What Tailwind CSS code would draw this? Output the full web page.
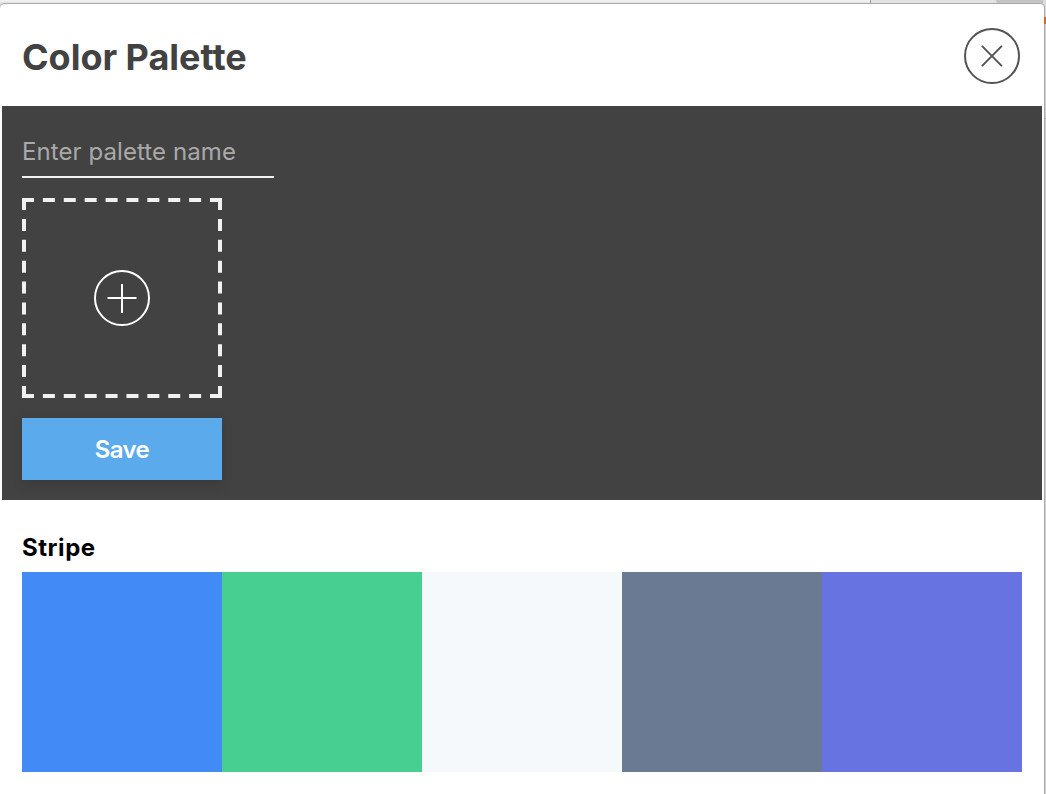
<!DOCTYPE html>
<html lang="en">
<head>
<meta charset="utf-8">
<title>Color Palette</title>
<script src="https://cdn.jsdelivr.net/npm/@tailwindcss/browser@4"></script>
</head>
<body class="relative h-[794px] w-[1046px] overflow-hidden bg-[#cfcfcf] font-['Inter','Liberation_Sans',sans-serif]">
<div class="absolute inset-x-0 top-0 flex h-[4px] bg-linear-to-b from-[#f4f4f4] to-[#dedede]">
  <div class="w-[870px] border-r border-[#999] box-content"></div>
  <div class="w-[125px] bg-[#e2e2e2]"></div>
  <div class="flex-1 rounded-bl bg-[#c4c4c4]"></div>
</div>
<div class="absolute right-0 top-0 h-[17px] w-[3px] bg-[#dcdcdc]"></div>
<main class="relative mt-[3px] h-[800px] w-[1045px] rounded-t-[5px] border-r border-t border-[#aaa] bg-white">
  <header class="flex h-[102px] items-center justify-between pl-[22px] pr-[24px]">
    <h1 class="relative top-[2px] text-[36px] leading-[44px] font-bold tracking-[-0.02px] text-[#424242]">Color Palette</h1>
    <button aria-label="Close" class="mt-[2px]">
      <svg class="block size-[56px]" viewBox="0 0 56 56" fill="none" stroke="#555" stroke-width="2"><circle cx="28" cy="28" r="27"/><path stroke-linecap="round" d="M18.4 18.4 37.4 37.6M37.4 18.4 18.4 37.6"/></svg>
    </button>
  </header>
  <section class="ml-[2px] flex h-[394px] w-[1040px] flex-col items-start bg-[#424242] px-5 pt-5">
    <input aria-label="Palette name" placeholder="Enter palette name" class="h-[52px] w-[252px] border-b-2 border-[#f1f1f1] text-[24px] tracking-[0.08px] text-white outline-none placeholder:text-[#a9a9a9]">
    <button aria-label="Add color" class="mt-5">
      <svg class="block size-[200px]" viewBox="0 0 200 200" fill="none">
        <g stroke="#f1f1f1" stroke-width="4" stroke-dasharray="12 8.889"><path d="M0 2H200"/><path d="M0 198H200"/><path d="M2 0V200"/><path d="M198 0V200"/></g>
        <g stroke="#fff" stroke-width="2"><circle cx="100" cy="100" r="27"/><path d="M85.5 100H114.5M100 86V115"/></g>
      </svg>
    </button>
    <button class="mt-5 h-[62px] w-[200px] bg-[#5aaaec] pt-[2px] text-[24px] font-semibold tracking-[-0.6px] text-white shadow-[0_4px_10px_rgba(0,0,0,0.14)]">Save</button>
  </section>
  <section class="px-[22px] pt-8">
    <h2 class="h-[40px] text-[24px] leading-[32px] font-bold tracking-[0.55px] text-black">Stripe</h2>
    <div class="grid h-[200px] w-[1000px] grid-cols-5">
      <div class="bg-[#428af6]"></div>
      <div class="bg-[#47cf91]"></div>
      <div class="bg-[#f5f9fc]"></div>
      <div class="bg-[#6a7a92]"></div>
      <div class="bg-[#6773e1]"></div>
    </div>
  </section>
</main>
<div class="absolute right-0 top-[17px] h-[7px] w-[2px] bg-[#cb6a2c]"></div>
<div class="absolute right-0 top-[118px] h-px w-[2px] bg-[#a5a5a5]"></div>
</body>
</html>
